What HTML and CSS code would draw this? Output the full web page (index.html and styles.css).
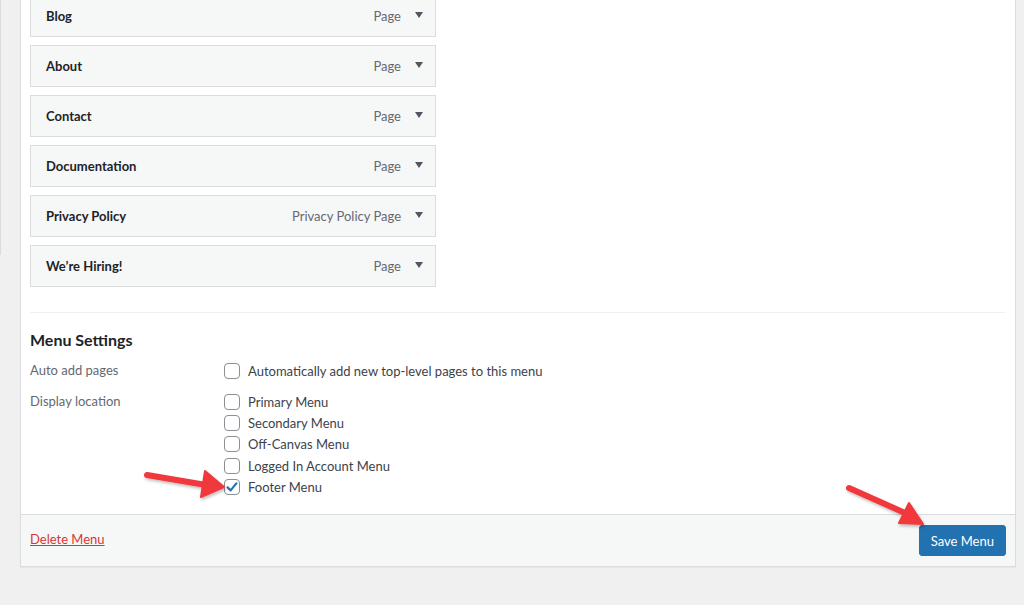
FILE: index.html
```html
<!DOCTYPE html>
<html lang="en">
<head>
  <meta charset="UTF-8" />
  <title>Menus</title>
  <link rel="stylesheet" href="styles.css">
</head>
<body>

  <div class="side">
    <div class="side-edge"></div>
  </div>

  <!-- Menu editor panel -->
  <div class="panel">
    <div class="panel-body">
      <ul class="menu-items">
        <li class="item"><span class="item-title">Blog</span><span class="item-type">Page</span><span class="caret"></span></li>
        <li class="item"><span class="item-title">About</span><span class="item-type">Page</span><span class="caret"></span></li>
        <li class="item"><span class="item-title">Contact</span><span class="item-type">Page</span><span class="caret"></span></li>
        <li class="item"><span class="item-title">Documentation</span><span class="item-type">Page</span><span class="caret"></span></li>
        <li class="item"><span class="item-title">Privacy Policy</span><span class="item-type">Privacy Policy Page</span><span class="caret"></span></li>
        <li class="item"><span class="item-title">We’re Hiring!</span><span class="item-type">Page</span><span class="caret"></span></li>
      </ul>

      <div class="settings">
        <h3>Menu Settings</h3>

        <div class="setting auto">
          <div class="setting-label">Auto add pages</div>
          <div class="setting-options">
            <label class="check"><span class="box"></span>Automatically add new top-level pages to this menu</label>
          </div>
        </div>

        <div class="setting">
          <div class="setting-label">Display location</div>
          <div class="setting-options">
            <label class="check"><span class="box"></span>Primary Menu</label>
            <label class="check"><span class="box"></span>Secondary Menu</label>
            <label class="check"><span class="box"></span>Off-Canvas Menu</label>
            <label class="check"><span class="box"></span>Logged In Account Menu</label>
            <label class="check"><span class="box checked">
              <svg viewBox="0 0 16 16" width="16" height="16"><path d="M3.6 8.4l3 3 5.8-7" fill="none" stroke="#2271b1" stroke-width="2.2" stroke-linecap="round" stroke-linejoin="round"/></svg>
            </span>Footer Menu</label>
          </div>
        </div>
      </div>
    </div>

    <div class="panel-footer">
      <a href="#" class="delete">Delete Menu</a>
      <button class="save">Save Menu</button>
    </div>
  </div>

  <!-- annotation arrows -->
  <svg class="arrows" width="1024" height="605" viewBox="0 0 1024 605">
    <defs>
      <filter id="shadow" x="-20%" y="-20%" width="140%" height="140%">
        <feDropShadow dx="1" dy="2" stdDeviation="1.5" flood-color="#000" flood-opacity="0.25"/>
      </filter>
    </defs>
    <g fill="#f0393c" stroke="#f0393c" filter="url(#shadow)">
      <line x1="147" y1="475" x2="206" y2="485" stroke-width="6" stroke-linecap="round"/>
      <polygon points="205,471 224,487 201,497" stroke-width="2" stroke-linejoin="round"/>
      <line x1="849" y1="488" x2="905" y2="513" stroke-width="6" stroke-linecap="round"/>
      <polygon points="909,503 923,524 899,523" stroke-width="2" stroke-linejoin="round"/>
    </g>
  </svg>

</body>
</html>
```

FILE: styles.css
```css
body {
  margin: 0;
  height: 605px;
  overflow: hidden;
  background: #f0f0f1;
  font-family: 'Lato', 'Segoe UI', sans-serif;
  font-size: 13px;
  color: #3c434a;
  display: flex;
  position: relative;
}

.side {
  width: 20px;
  flex-shrink: 0;
}

.side-edge {
  width: 1px;
  height: 255px;
  background: #dcdcde;
}

.panel {
  width: 996px;
  box-sizing: border-box;
  margin-top: -10px;
  align-self: flex-start;
  background: #fff;
  border: 1px solid #dcdcde;
  box-shadow: 0 1px 1px rgba(0,0,0,0.04);
}

.panel-body {
  padding: 4px 10px 16px 9px;
}

.menu-items {
  list-style: none;
  margin: 0;
  padding: 0 0 25px;
  border-bottom: 1px solid #f0f0f1;
}

.item {
  width: 406px;
  height: 42px;
  box-sizing: border-box;
  margin-bottom: 8px;
  padding: 0 12px 0 15px;
  background: #f6f7f7;
  border: 1px solid #dcdcde;
  display: flex;
  align-items: center;
}

.item:last-child {
  margin-bottom: 0;
}

.item-title {
  flex: 1;
  font-weight: 700;
  color: #1d2327;
}

.item-type {
  color: #646970;
  font-size: 13px;
  margin-right: 14px;
}

.caret {
  width: 0;
  height: 0;
  border-left: 4px solid transparent;
  border-right: 4px solid transparent;
  border-top: 6px solid #50575e;
  margin-top: -3px;
}

.settings h3 {
  margin: 17px 0 10px;
  font-size: 16px;
  line-height: 20px;
  font-weight: 700;
  color: #1d2327;
}

.setting {
  display: flex;
}

.setting.auto {
  margin-bottom: 10px;
}

.setting-label {
  width: 194px;
  line-height: 21px;
  color: #646970;
}

.setting-options {
  display: flex;
  flex-direction: column;
}

.check {
  height: 21.25px;
  display: flex;
  align-items: center;
  gap: 8px;
  color: #3c434a;
}

.box {
  width: 16px;
  height: 16px;
  box-sizing: border-box;
  border: 1px solid #8c8f94;
  border-radius: 4px;
  background: #fff;
  display: flex;
  align-items: center;
  justify-content: center;
}

.box svg {
  flex-shrink: 0;
}

.panel-footer {
  height: 51px;
  padding: 0 9px 0 9px;
  background: #f6f7f7;
  border-top: 1px solid #dcdcde;
  display: flex;
  align-items: center;
  justify-content: space-between;
}

.delete {
  color: #d63638;
  text-decoration: underline;
  margin-top: -2px;
}

.save {
  height: 31px;
  padding: 0 11px;
  background: #2271b1;
  border: 1px solid #2271b1;
  border-radius: 3px;
  color: #fff;
  font-family: inherit;
  font-size: 13px;
  margin-top: 1px;
}

.arrows {
  position: absolute;
  left: 0;
  top: 0;
  pointer-events: none;
}
```
